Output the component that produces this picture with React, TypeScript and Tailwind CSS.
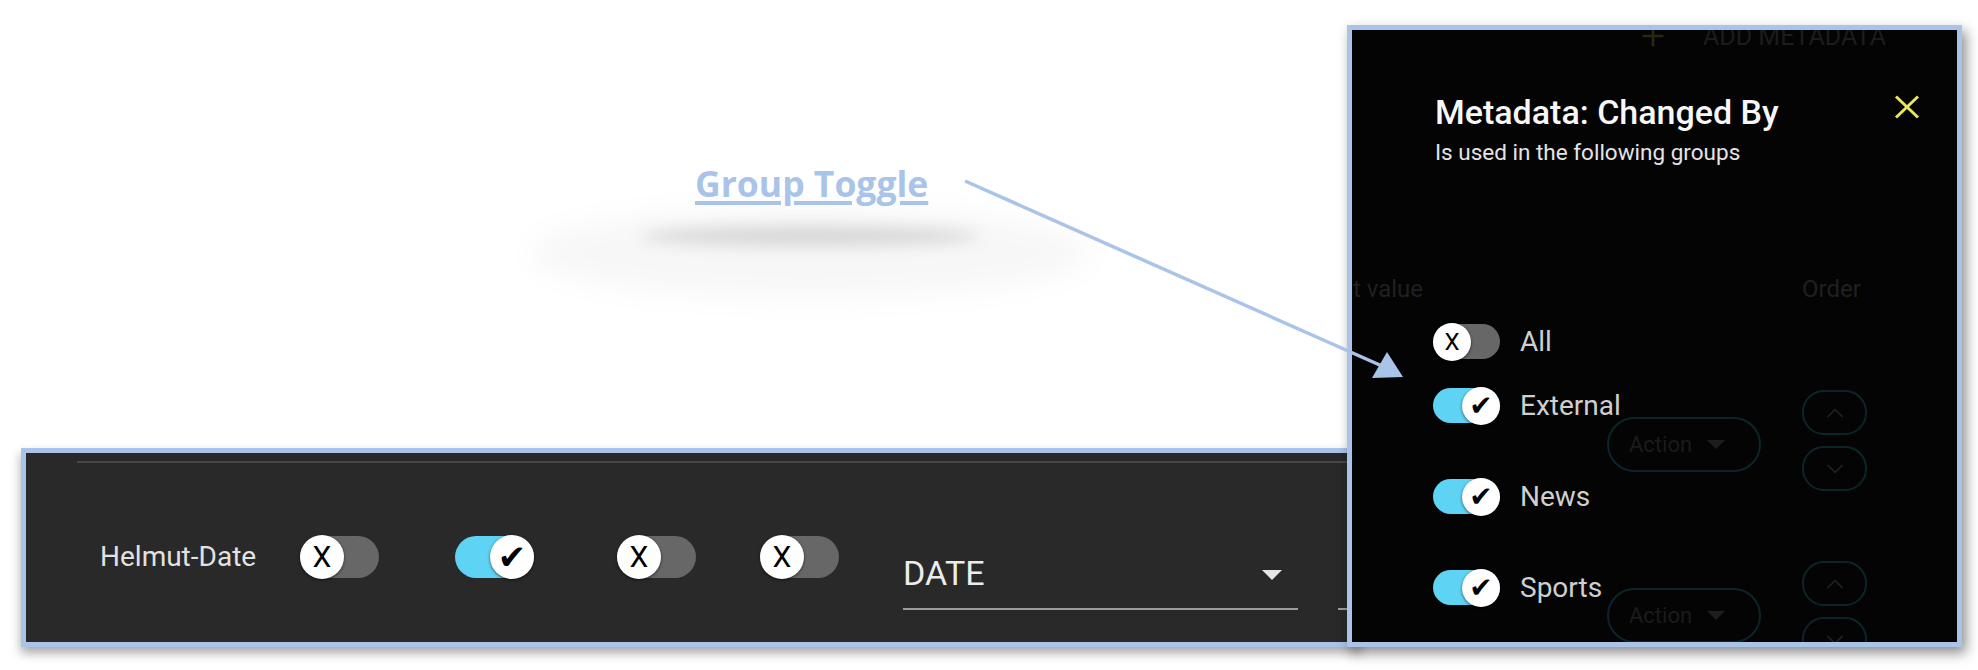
import { ChevronDown, ChevronUp, Plus } from "lucide-react";

const ui = "font-['Roboto','Liberation_Sans',sans-serif]";

function Knob({ on, small }: { on: boolean; small?: boolean }) {
  return (
    <div
      className={`flex shrink-0 items-center justify-center rounded-full bg-white shadow-[0_1px_3px_rgba(0,0,0,0.6)] ${
        small ? "w-[38px] h-[38px]" : "w-[44px] h-[44px]"
      }`}
    >
      {on ? (
        <span
          className={`font-['DejaVu_Sans',sans-serif] leading-none text-black ${
            small ? "text-[28px]" : "text-[34px]"
          }`}
        >
          ✔
        </span>
      ) : (
        <span
          className={`${ui} leading-none text-black ${small ? "text-[24px]" : "text-[30px]"}`}
        >
          X
        </span>
      )}
    </div>
  );
}

function Toggle({ on, small }: { on: boolean; small?: boolean }) {
  return (
    <div
      className={`flex shrink-0 items-center rounded-full ${on ? "justify-end bg-[#5fd3f3]" : "justify-start bg-[#676767]"} ${
        small ? "w-[67px] h-[35px]" : "w-[79px] h-[42px]"
      }`}
    >
      <Knob on={on} small={small} />
    </div>
  );
}

function BottomPanel() {
  return (
    <div className="ml-[21px] w-[1339px] h-[199px] border-[5px] border-[#a9c4e8] bg-[#292929] shadow-[0_6px_10px_rgba(0,0,0,0.35)] overflow-hidden">
      <div className="mt-[8px] ml-[51px] h-[2px] bg-[#474747]" />
      <div className="mt-[72px] h-[44px] flex items-center pl-[74px]">
        <div className={`${ui} w-[200px] shrink-0 whitespace-nowrap text-[28px] leading-none text-[#e2e2e2]`}>
          Helmut-Date
        </div>
        <div className="w-[155px] shrink-0">
          <Toggle on={false} />
        </div>
        <div className="w-[162px] shrink-0">
          <Toggle on />
        </div>
        <div className="w-[143px] shrink-0">
          <Toggle on={false} />
        </div>
        <div className="w-[143px] shrink-0">
          <Toggle on={false} />
        </div>
        <div className="self-start mt-[21px] w-[395px] shrink-0 flex items-start justify-between pb-[18px] pr-[16px] border-b-2 border-[#9b9b9b]">
          <span className={`${ui} text-[34px] leading-none text-[#ececec]`}>DATE</span>
          <span className="mt-[14px] w-0 h-0 border-l-[10px] border-r-[10px] border-t-[10px] border-l-transparent border-r-transparent border-t-[#e6e6e6]" />
        </div>
        <div className="self-start mt-[73px] ml-[40px] w-[200px] shrink-0 border-b-2 border-[#9b9b9b]" />
      </div>
    </div>
  );
}

function ActionPill({ className }: { className: string }) {
  return (
    <div
      className={`${className} w-[154px] h-[55px] shrink-0 flex items-center gap-[15px] pl-[20px] rounded-full border-2 border-[#0c252a]`}
    >
      <span className={`${ui} text-[22px] leading-none text-[#1b1b1b]`}>Action</span>
      <span className="w-0 h-0 border-l-[9px] border-r-[9px] border-t-[9px] border-l-transparent border-r-transparent border-t-[#1d1d1d]" />
    </div>
  );
}

function OrderButtons() {
  return (
    <div className="ml-[41px] flex shrink-0 flex-col gap-[11px]">
      <div className="w-[65px] h-[45px] flex items-center justify-center rounded-[22px] border-2 border-[#0c252a]">
        <ChevronUp size={28} strokeWidth={1.5} color="#222" />
      </div>
      <div className="w-[65px] h-[45px] flex items-center justify-center rounded-[22px] border-2 border-[#0c252a]">
        <ChevronDown size={28} strokeWidth={1.5} color="#222" />
      </div>
    </div>
  );
}

function DimmedTable() {
  return (
    <div className={`${ui} absolute inset-0 flex flex-col`}>
      <div className="-mt-[7px] h-[26px] flex items-center">
        <Plus className="ml-[285px]" size={32} strokeWidth={2} color="#28270f" />
        <span className="ml-[34px] text-[25px] leading-none text-[#1c1c1c]">ADD METADATA</span>
      </div>
      <div className="mt-[228px] h-[24px] flex items-center text-[24px] leading-none text-[#202020]">
        <div className="w-[71px] flex justify-end whitespace-nowrap">Default value</div>
        <div className="ml-[379px]">Order</div>
      </div>
      <div className="mt-[38px] w-[533px] h-px bg-[#121212]" />
      <div className="mt-[51px] flex items-start">
        <ActionPill className="mt-[27px] ml-[255px]" />
        <OrderButtons />
      </div>
      <div className="-mt-[3px] w-[170px] h-px bg-[#161616]" />
      <div className="mt-[37px] w-[533px] h-px bg-[#101010]" />
      <div className="mt-[36px] flex items-start">
        <ActionPill className="mt-[27px] ml-[255px]" />
        <OrderButtons />
      </div>
    </div>
  );
}

function GroupRow({ on, label, className }: { on: boolean; label: string; className: string }) {
  return (
    <div className={`${className} h-[38px] flex items-center gap-[20px] pl-[81px]`}>
      <Toggle on={on} small />
      <span className={`${ui} text-[28px] leading-none text-[#cfcfcf]`}>{label}</span>
    </div>
  );
}

function MetadataPopup() {
  return (
    <div className="absolute left-[1347px] top-[25px] w-[615px] h-[622px] border-[5px] border-[#a9c4e8] bg-[#040404] shadow-[4px_6px_12px_rgba(0,0,0,0.45)] overflow-hidden">
      <DimmedTable />
      <div className="relative">
        <div className="pt-[65px] pl-[83px] pr-[37px] flex items-start justify-between">
          <h2 className={`${ui} text-[34px] leading-none font-medium text-[#f7f7f7]`}>Metadata: Changed By</h2>
          <svg width="26" height="24" viewBox="0 0 26 24">
            <path d="M2 1.5 L24 22.5 M24 1.5 L2 22.5" stroke="#ece65a" strokeWidth="3" fill="none" />
          </svg>
        </div>
        <p className={`${ui} mt-[12px] pl-[83px] text-[22.5px] leading-none text-[#e4e4e4]`}>
          Is used in the following groups
        </p>
        <GroupRow className="mt-[159px]" on={false} label="All" />
        <GroupRow className="mt-[26px]" on label="External" />
        <GroupRow className="mt-[53px]" on label="News" />
        <GroupRow className="mt-[53px]" on label="Sports" />
      </div>
    </div>
  );
}

export default function App() {
  return (
    <div className="relative w-[1978px] h-[670px] bg-white overflow-hidden">
      <div className="absolute left-[530px] top-[208px] w-[560px] h-[90px] rounded-[50%] bg-black/[0.03] blur-[14px]" />
      <div className="absolute left-[640px] top-[226px] w-[340px] h-[20px] rounded-[50%] bg-black/[0.13] blur-[8px]" />

      <div className="relative flex flex-col">
        <div className="h-[448px] pt-[166px] pl-[695px]">
          <span className="font-['Open_Sans',sans-serif] text-[35.5px] leading-none font-bold text-[#a9c4e8] underline decoration-4 underline-offset-[4px]">
            Group Toggle
          </span>
        </div>
        <BottomPanel />
      </div>

      <MetadataPopup />

      <svg className="absolute inset-0 pointer-events-none" width="1978" height="670">
        <line x1="965" y1="181" x2="1382" y2="366" stroke="#a9c4e8" strokeWidth="3.5" />
        <polygon points="1403,377 1372,378 1387,352" fill="#a9c4e8" />
      </svg>
    </div>
  );
}
